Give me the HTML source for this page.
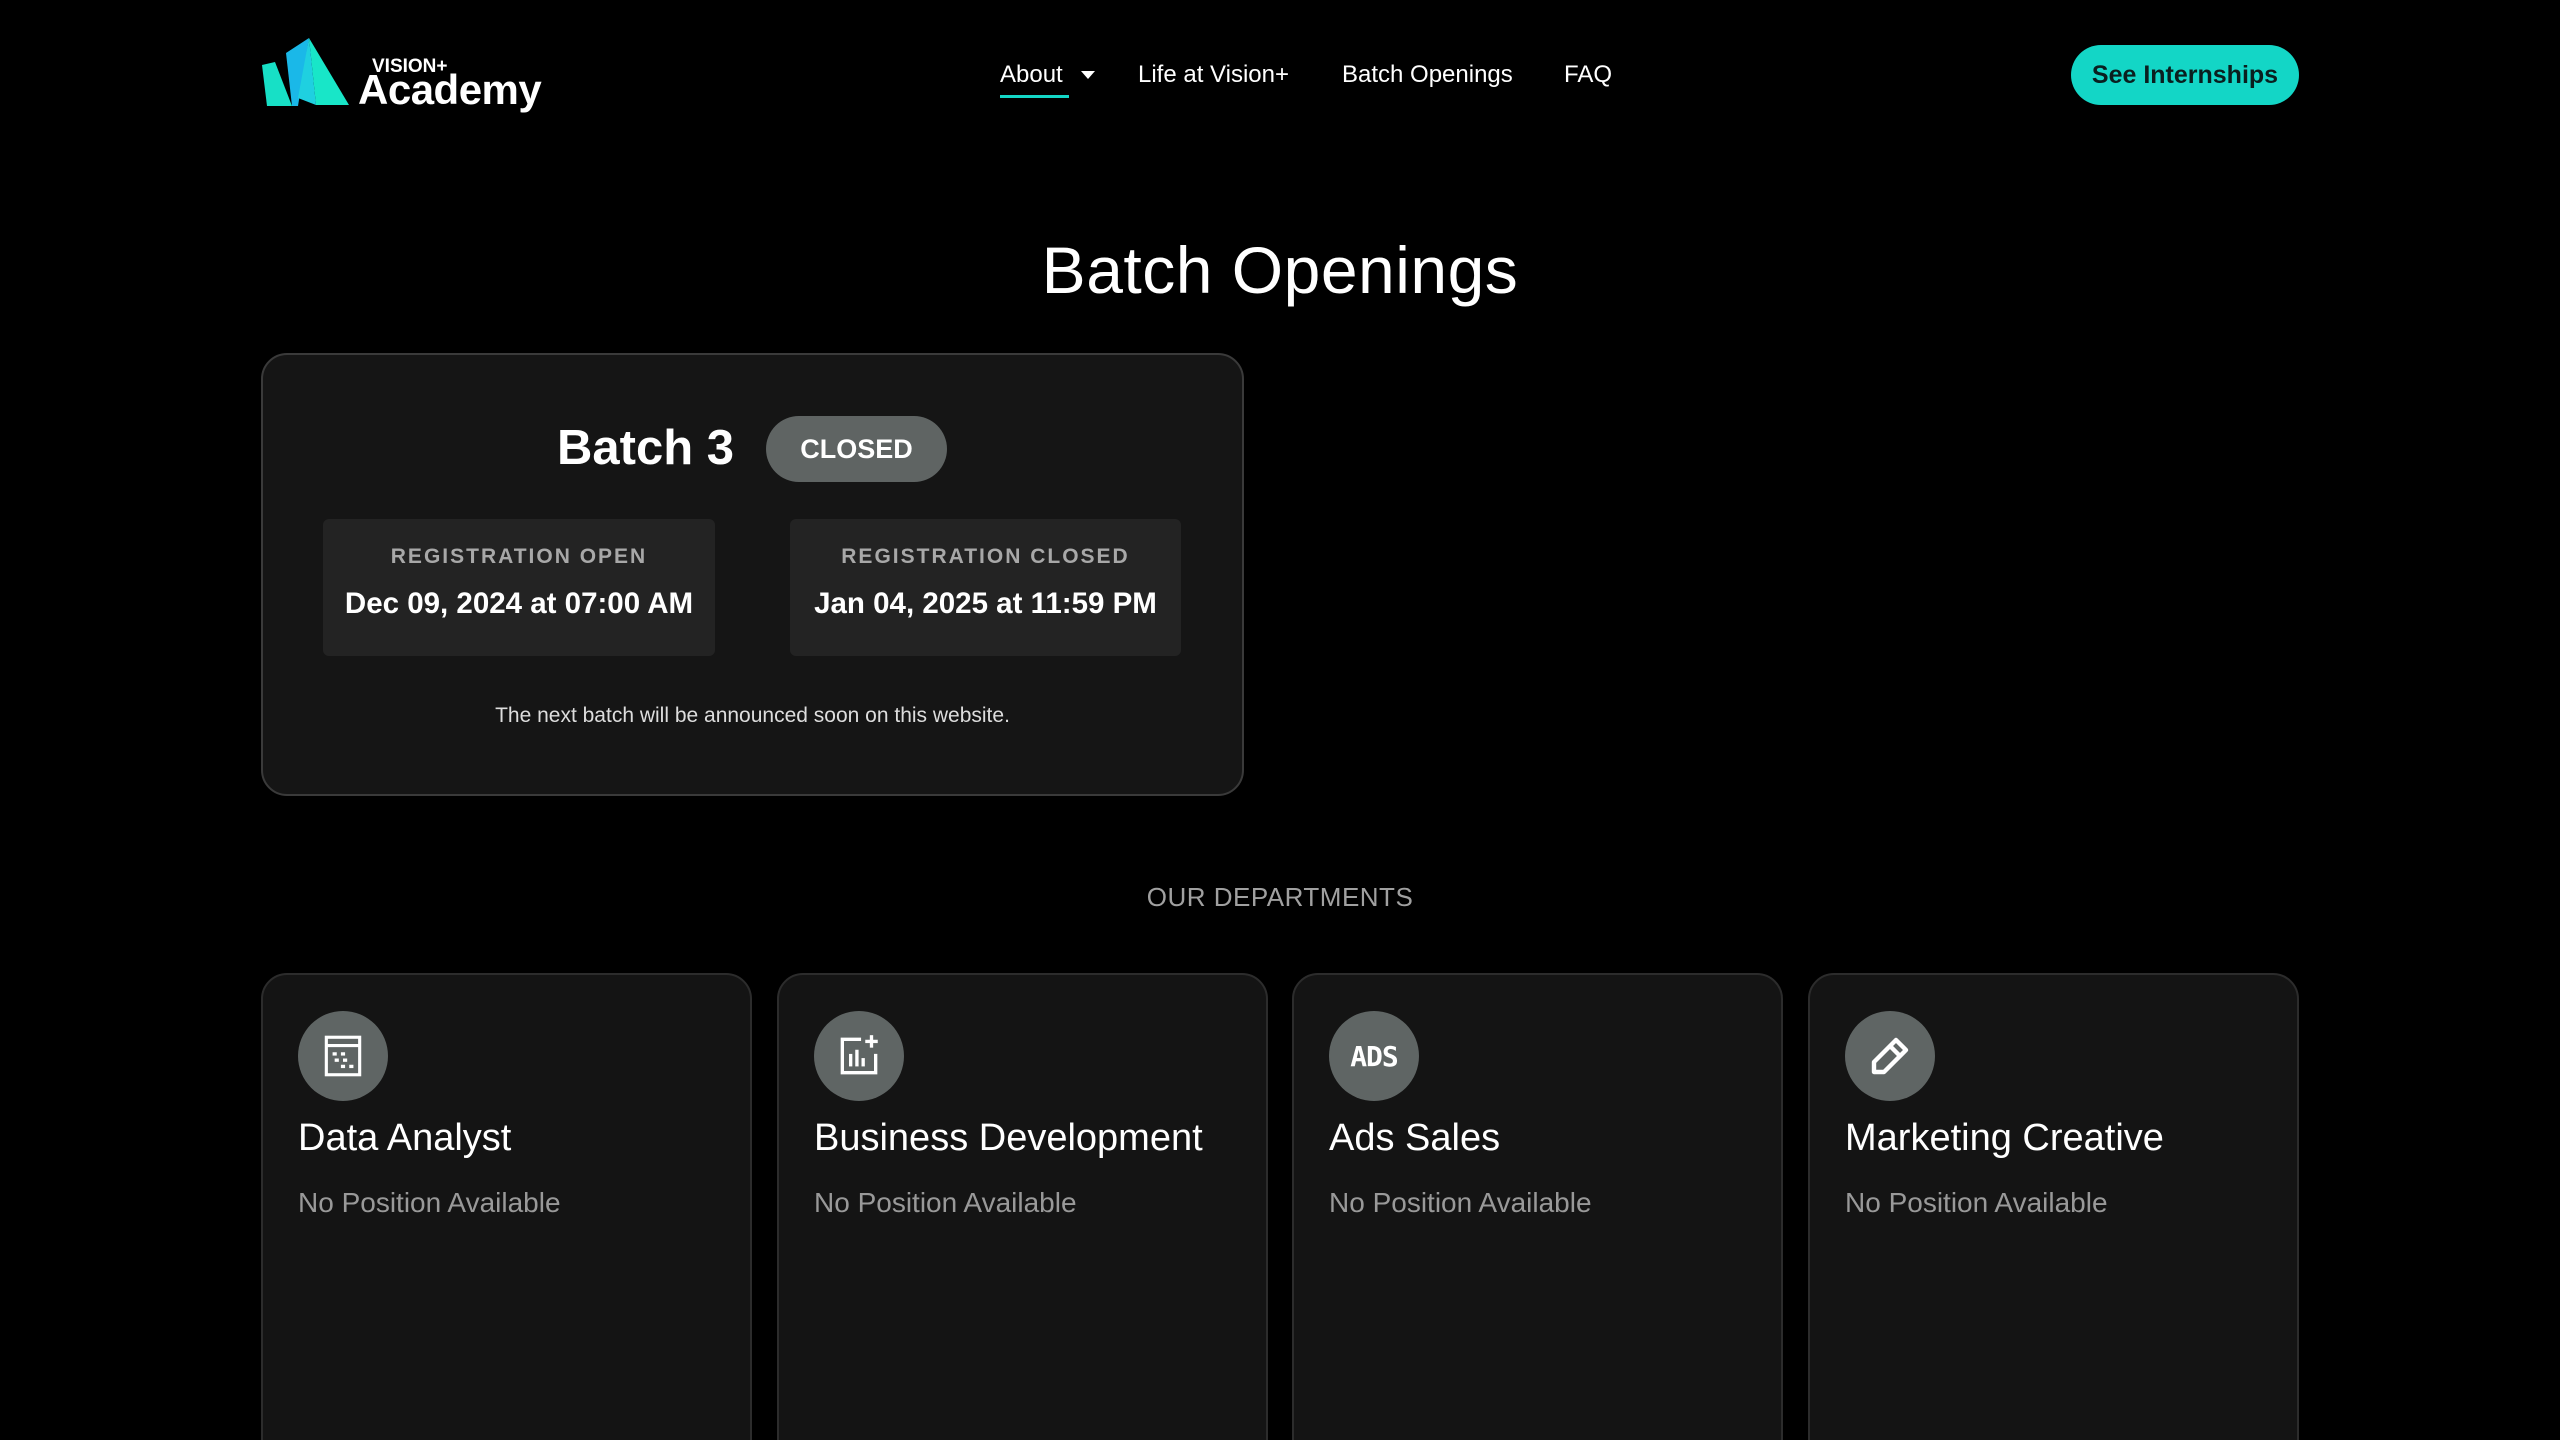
<!DOCTYPE html>
<html><head><meta charset="utf-8"><style>
*{box-sizing:border-box;margin:0;padding:0}
html,body{width:2560px;height:1440px;overflow:hidden;background:#000}
body{color:#fff;font-family:"Liberation Sans",sans-serif}
#w{position:relative;width:2560px;height:1440px;overflow:hidden}
.abs{position:absolute}
.nav a{position:absolute;top:60px;font-size:24px;color:#fff;text-decoration:none;line-height:30px}
.btn{left:2071px;top:45px;width:228px;height:60px;border-radius:30px;background:#13d6c6;font-size:25px;font-weight:bold;text-align:center;line-height:60px;color:#0a1f1f}
h1{position:absolute;left:0;width:2560px;text-align:center;top:232px;font-size:66px;font-weight:normal;letter-spacing:0.5px}
.card{left:261px;top:353px;width:983px;height:443px;background:#151515;border:2px solid #3a3a3a;border-radius:26px}
.box{position:absolute;top:519px;height:137px;background:#232323;border-radius:6px;text-align:center}
.box .l{margin-top:26px;font-size:21px;font-weight:bold;letter-spacing:2px;color:#a8a8a8}
.box .v{margin-top:18px;font-size:29.5px;font-weight:bold}
.dept{position:absolute;top:973px;width:491px;height:500px;background:#141414;border:2px solid #2c2c2c;border-radius:26px}
.ic{position:absolute;left:35px;top:36px;width:90px;height:90px;border-radius:50%;background:#5f6564;display:flex;align-items:center;justify-content:center}
.dt{position:absolute;left:35px;top:142px;font-size:38px}
.ds{position:absolute;left:35px;top:212px;font-size:28px;color:#999}
</style></head><body><div id="w">
<svg class="abs" style="left:262px;top:38px" width="90" height="68" viewBox="0 0 90 68">
<polygon points="0,27 13,24 30,68 5,68" fill="#17e0c6"/>
<polygon points="24,15 47,0 36,68 30,68" fill="#1ab8e8"/>
<polygon points="47,0 87,67 54,67" fill="#18e6c8"/>
<polygon points="47,0 54,67 36,60" fill="#1fd0e0"/>
</svg>
<div class="abs" style="left:372px;top:56px;font-size:19px;font-weight:bold">VISION+</div>
<div class="abs" style="left:358px;top:66px;font-size:42px;font-weight:bold;letter-spacing:-0.5px;line-height:48px">Academy</div>
<div class="nav">
<a style="left:1000px">About</a>
<div class="abs" style="left:1000px;top:95px;width:69px;height:3px;background:#13d6c6"></div>
<div class="abs" style="left:1081px;top:71px;border-left:7px solid transparent;border-right:7px solid transparent;border-top:8px solid #fff"></div>
<a style="left:1138px">Life at Vision+</a>
<a style="left:1342px">Batch Openings</a>
<a style="left:1564px">FAQ</a>
</div>
<div class="abs btn">See Internships</div>
<h1>Batch Openings</h1>
<div class="abs card"></div>
<div class="abs" style="left:557px;top:420px;font-size:49px;font-weight:bold">Batch 3</div>
<div class="abs" style="left:766px;top:416px;width:181px;height:66px;border-radius:33px;background:#5f6463;text-align:center;line-height:66px;font-size:27px;font-weight:bold">CLOSED</div>
<div class="box" style="left:323px;width:392px"><div class="l">REGISTRATION OPEN</div><div class="v">Dec 09, 2024 at 07:00 AM</div></div>
<div class="box" style="left:790px;width:391px"><div class="l">REGISTRATION CLOSED</div><div class="v">Jan 04, 2025 at 11:59 PM</div></div>
<div class="abs" style="left:261px;width:983px;top:704px;text-align:center;font-size:21px;color:#ddd">The next batch will be announced soon on this website.</div>
<div class="abs" style="left:0;width:2560px;top:882px;text-align:center;font-size:26px;color:#a0a0a0;letter-spacing:0.5px">OUR DEPARTMENTS</div>
<div class="dept" style="left:261px"><div class="ic"><svg width="50" height="50" viewBox="0 0 24 24" fill="none" stroke="#fff" stroke-width="1.5"><rect x="4" y="3" width="16" height="18"/><line x1="4" y1="7" x2="20" y2="7"/><g stroke-width="1.6"><line x1="7" y1="11" x2="9" y2="11"/><line x1="11" y1="11" x2="13" y2="11"/><line x1="8" y1="14" x2="10" y2="14"/><line x1="12" y1="14" x2="14" y2="14"/><line x1="11" y1="17" x2="13" y2="17"/><line x1="15" y1="17" x2="17" y2="17"/></g></svg></div><div class="dt">Data Analyst</div><div class="ds">No Position Available</div></div>
<div class="dept" style="left:777px"><div class="ic"><svg width="50" height="50" viewBox="0 0 24 24" fill="none" stroke="#fff" stroke-width="1.6"><path d="M13 4H4v16h16v-9"/><line x1="8" y1="11" x2="8" y2="17"/><line x1="11" y1="9" x2="11" y2="17"/><line x1="14" y1="13" x2="14" y2="17"/><line x1="18" y1="2" x2="18" y2="8"/><line x1="15" y1="5" x2="21" y2="5"/></svg></div><div class="dt">Business Development</div><div class="ds">No Position Available</div></div>
<div class="dept" style="left:1292px"><div class="ic"><span style="font-family:'DejaVu Sans Mono',monospace;font-weight:bold;font-size:28px;letter-spacing:-1px">ADS</span></div><div class="dt">Ads Sales</div><div class="ds">No Position Available</div></div>
<div class="dept" style="left:1808px"><div class="ic"><svg width="48" height="48" viewBox="0 0 24 24" fill="none" stroke="#fff" stroke-width="2.2" stroke-linejoin="round"><path d="M15 4l5 5L9 20H4v-5z"/><line x1="12" y1="7" x2="17" y2="12"/></svg></div><div class="dt">Marketing Creative</div><div class="ds">No Position Available</div></div>
</div></body></html>
